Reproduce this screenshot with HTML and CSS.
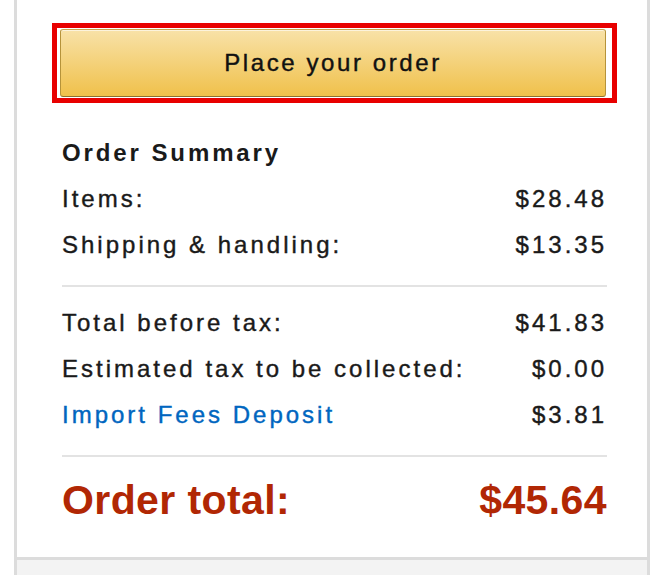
FILE: index.html
```html
<!DOCTYPE html>
<html lang="en">
  <head>
    <meta charset="UTF-8" />
    <meta name="viewport" content="width=device-width, initial-scale=1.0" />
    <title>Order Summary</title>
    <link rel="stylesheet" href="styles.css">
  </head>
  <body>
    <div class="checkout-box">
      <div class="order-panel">
        <!-- highlighted place order button -->
        <div class="highlight">
          <button class="place-order">Place your order</button>
        </div>

        <h3 class="summary-title">Order Summary</h3>
        <div class="summary-row">
          <span>Items:</span>
          <span>$28.48</span>
        </div>
        <div class="summary-row">
          <span>Shipping &amp; handling:</span>
          <span>$13.35</span>
        </div>

        <hr class="divider" />

        <div class="summary-row">
          <span>Total before tax:</span>
          <span>$41.83</span>
        </div>
        <div class="summary-row">
          <span>Estimated tax to be collected:</span>
          <span>$0.00</span>
        </div>
        <div class="summary-row">
          <a href="#" class="fee-link">Import Fees Deposit</a>
          <span>$3.81</span>
        </div>

        <hr class="divider" />

        <div class="summary-row grand-total">
          <span>Order total:</span>
          <span>$45.64</span>
        </div>
      </div>
      <div class="panel-footer"></div>
    </div>
  </body>
</html>
```

FILE: styles.css
```css
* {
  box-sizing: border-box;
  margin: 0;
  padding: 0;
}

body {
  font-family: "Liberation Sans", Arial, sans-serif;
  color: #1a1a1a;
  background: #fff;
}

.checkout-box {
  margin-left: 14px;
  height: 575px;
  border-left: 3px solid #dcdcdc;
  border-right: 3px solid #dcdcdc;
  display: flex;
  flex-direction: column;
}

.order-panel {
  padding: 23px 40px 27px 45px;
}

.highlight {
  margin: 0 -10px;
  height: 80px;
  border: 5px solid #e80000;
  padding: 1px 6px 1px 3px;
  display: flex;
}

.place-order {
  flex: 1;
  border: 1px solid #a88734;
  border-color: #c9a44a #b6933a #8c7030;
  border-radius: 3px;
  background: linear-gradient(to bottom, #f8e2a8, #f0c14b);
  box-shadow: inset 0 1px 0 rgba(255, 255, 255, 0.6);
  font-family: "Liberation Sans", Arial, sans-serif;
  font-size: 24px;
  letter-spacing: 2.6px;
  -webkit-text-stroke: 0.4px currentColor;
  color: #111;
  cursor: pointer;
}

.summary-title {
  margin-top: 27px;
  font-size: 24px;
  font-weight: bold;
  letter-spacing: 2.9px;
  line-height: 46px;
}

.summary-row {
  display: flex;
  justify-content: space-between;
  font-size: 24px;
  letter-spacing: 3px;
  line-height: 46px;
  -webkit-text-stroke: 0.4px currentColor;
}

.fee-link {
  color: #0066c0;
  text-decoration: none;
}

.divider {
  border: none;
  border-top: 2px solid #e3e3e3;
  margin: 17px 0 13px;
}

.grand-total {
  font-size: 41px;
  font-weight: bold;
  letter-spacing: 0.4px;
  line-height: 60px;
  color: #b12704;
  -webkit-text-stroke: 0;
}

.panel-footer {
  flex: 1;
  border-top: 3px solid #dcdcdc;
  background: #f3f3f3;
}
```
